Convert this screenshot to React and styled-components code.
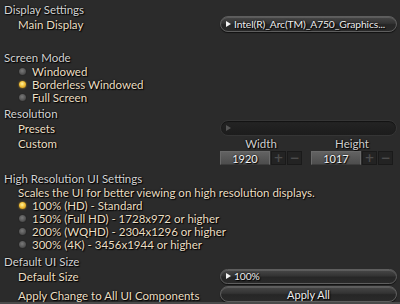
import React from "react";
import styled, { createGlobalStyle } from "styled-components";

const Global = createGlobalStyle`
  html, body { margin: 0; padding: 0; background: #2b2b2b; }
`;

const Panel = styled.div`
  width: 400px;
  height: 304px;
  box-sizing: border-box;
  overflow: hidden;
  padding: 2px 3px 0 4px;
  background: #2b2b2b;
  font-family: Lato, "Liberation Sans", sans-serif;
  font-size: 11.5px;
  display: flex;
  flex-direction: column;
  text-shadow: 0 0 2px #000, 1px 1px 1px #000;
`;

const Header = styled.div`
  height: ${(p) => p.$h}px;
  margin-top: ${(p) => p.$mt || 0}px;
  display: flex;
  align-items: center;
  color: #d3d3d3;
  flex-shrink: 0;
`;

const Item = styled.div`
  height: ${(p) => p.$h}px;
  margin-top: ${(p) => p.$mt || 0}px;
  display: grid;
  grid-template-columns: 1fr 177px;
  align-items: center;
  padding-left: 14px;
  color: #ebdfc4;
  flex-shrink: 0;
`;

const Label = styled.span`
  padding-top: ${(p) => p.$pt || 0}px;
  align-self: ${(p) => (p.$pt ? "start" : "center")};
  white-space: nowrap;
`;

const Note = styled.div`
  height: ${(p) => p.$h}px;
  display: flex;
  align-items: center;
  padding-left: 14px;
  color: #ebdfc4;
  flex-shrink: 0;
  white-space: nowrap;
`;

const RadioRow = styled.div`
  height: 13px;
  display: flex;
  align-items: center;
  gap: 6px;
  padding-left: 15px;
  color: #ebdfc4;
  flex-shrink: 0;
  white-space: nowrap;
`;

const Dot = styled.span`
  width: 7px;
  height: 7px;
  border-radius: 50%;
  flex-shrink: 0;
  box-sizing: border-box;
  background: ${(p) =>
    p.$on
      ? "radial-gradient(circle at 45% 40%, #fff2a0 0%, #f3c23a 45%, #b07810 100%)"
      : "radial-gradient(circle at 45% 40%, #7a7a7a 0%, #555 55%, #333 100%)"};
  box-shadow: ${(p) =>
    p.$on ? "0 0 2px rgba(240,180,40,0.7)" : "0 0 1px #111"};
`;

const Pill = styled.div`
  height: ${(p) => p.$h || 16}px;
  box-sizing: border-box;
  border-radius: 8px;
  border: 1px solid ${(p) => (p.$dim ? "#353535" : "#5e5e5e")};
  background: ${(p) =>
    p.$dim
      ? "linear-gradient(#242424, #1c1c1c)"
      : "linear-gradient(#474747 0%, #333 45%, #262626 55%, #2a2a2a 100%)"};
  box-shadow: ${(p) =>
    p.$dim
      ? "inset 0 1px 1px rgba(0,0,0,0.5)"
      : "inset 0 1px 0 rgba(255,255,255,0.12), 0 1px 1px rgba(0,0,0,0.6)"};
  display: flex;
  align-items: center;
  justify-content: ${(p) => (p.$center ? "center" : "flex-start")};
  gap: 3px;
  padding-left: ${(p) => (p.$center ? 0 : 5)}px;
  color: #efefef;
  font-size: ${(p) => (p.$center ? 11 : 10.3)}px;
  letter-spacing: ${(p) => (p.$center ? 0 : -0.1)}px;
  white-space: nowrap;
  overflow: hidden;
`;

const Tri = styled.span`
  width: 0;
  height: 0;
  border-left: 5px solid ${(p) => (p.$dim ? "#555" : "#f2f2f2")};
  border-top: 3px solid transparent;
  border-bottom: 3px solid transparent;
  flex-shrink: 0;
`;

const Groups = styled.div`
  display: flex;
  gap: 9px;
`;

const ColLabel = styled.div`
  width: 82px;
  text-align: center;
  color: #cfcfcf;
`;

const Stepper = styled.div`
  display: flex;
  gap: 1px;
  height: 14px;
`;

const NumBox = styled.div`
  width: 50px;
  box-sizing: border-box;
  background: linear-gradient(#626262, #555 60%, #4d4d4d);
  border: 1px solid #6a6a6a;
  border-bottom-color: #3c3c3c;
  color: #f4f4f4;
  font-size: 11px;
  display: flex;
  align-items: center;
  justify-content: center;
`;

const StepBtn = styled.div`
  width: 15px;
  box-sizing: border-box;
  background: #232323;
  border: 1px solid #1a1a1a;
  color: #4c4c4c;
  text-shadow: none;
  font-family: "DejaVu Sans", sans-serif;
  font-size: 12px;
  font-weight: bold;
  display: flex;
  align-items: center;
  justify-content: center;
  line-height: 1;
`;

const BottomEdge = styled.div`
  margin-top: auto;
  height: 2px;
  margin-left: -4px;
  margin-right: -3px;
  background: #4a4a4a;
  flex-shrink: 0;
`;

const radios1 = [
  { t: "Windowed", on: false },
  { t: "Borderless Windowed", on: true },
  { t: "Full Screen", on: false },
];

const radios2 = [
  { t: "100% (HD) - Standard", on: true },
  { t: "150% (Full HD) - 1728x972 or higher", on: false },
  { t: "200% (WQHD) - 2304x1296 or higher", on: false },
  { t: "300% (4K) - 3456x1944 or higher", on: false },
];

export default function App() {
  return (
    <>
      <Global />
      <Panel>
        <Header $h={14}>Display Settings</Header>
        <Item $h={16}>
          <Label>Main Display</Label>
          <Pill>
            <Tri />
            Intel(R)_Arc(TM)_A750_Graphics...
          </Pill>
        </Item>

        <Header $h={15} $mt={18}>Screen Mode</Header>
        {radios1.map((r) => (
          <RadioRow key={r.t}>
            <Dot $on={r.on} />
            {r.t}
          </RadioRow>
        ))}

        <Header $h={14} $mt={2}>Resolution</Header>
        <Item $h={16}>
          <Label>Presets</Label>
          <Pill $dim>
            <Tri $dim />
          </Pill>
        </Item>
        <Item $h={15}>
          <Label>Custom</Label>
          <Groups>
            <ColLabel>Width</ColLabel>
            <ColLabel>Height</ColLabel>
          </Groups>
        </Item>
        <Item $h={14}>
          <span />
          <Groups>
            <Stepper>
              <NumBox>1920</NumBox>
              <StepBtn>+</StepBtn>
              <StepBtn>−</StepBtn>
            </Stepper>
            <Stepper>
              <NumBox>1017</NumBox>
              <StepBtn>+</StepBtn>
              <StepBtn>−</StepBtn>
            </Stepper>
          </Groups>
        </Item>

        <Header $h={15} $mt={6}>High Resolution UI Settings</Header>
        <Note $h={13}>Scales the UI for better viewing on high resolution displays.</Note>
        {radios2.map((r) => (
          <RadioRow key={r.t}>
            <Dot $on={r.on} />
            {r.t}
          </RadioRow>
        ))}

        <Header $h={14} $mt={3}>Default UI Size</Header>
        <Item $h={16}>
          <Label>Default Size</Label>
          <Pill $h={15}>
            <Tri />
            100%
          </Pill>
        </Item>
        <Item $h={16} $mt={2}>
          <Label $pt={3}>Apply Change to All UI Components</Label>
          <Pill $center>Apply All</Pill>
        </Item>
        <BottomEdge />
      </Panel>
    </>
  );
}
